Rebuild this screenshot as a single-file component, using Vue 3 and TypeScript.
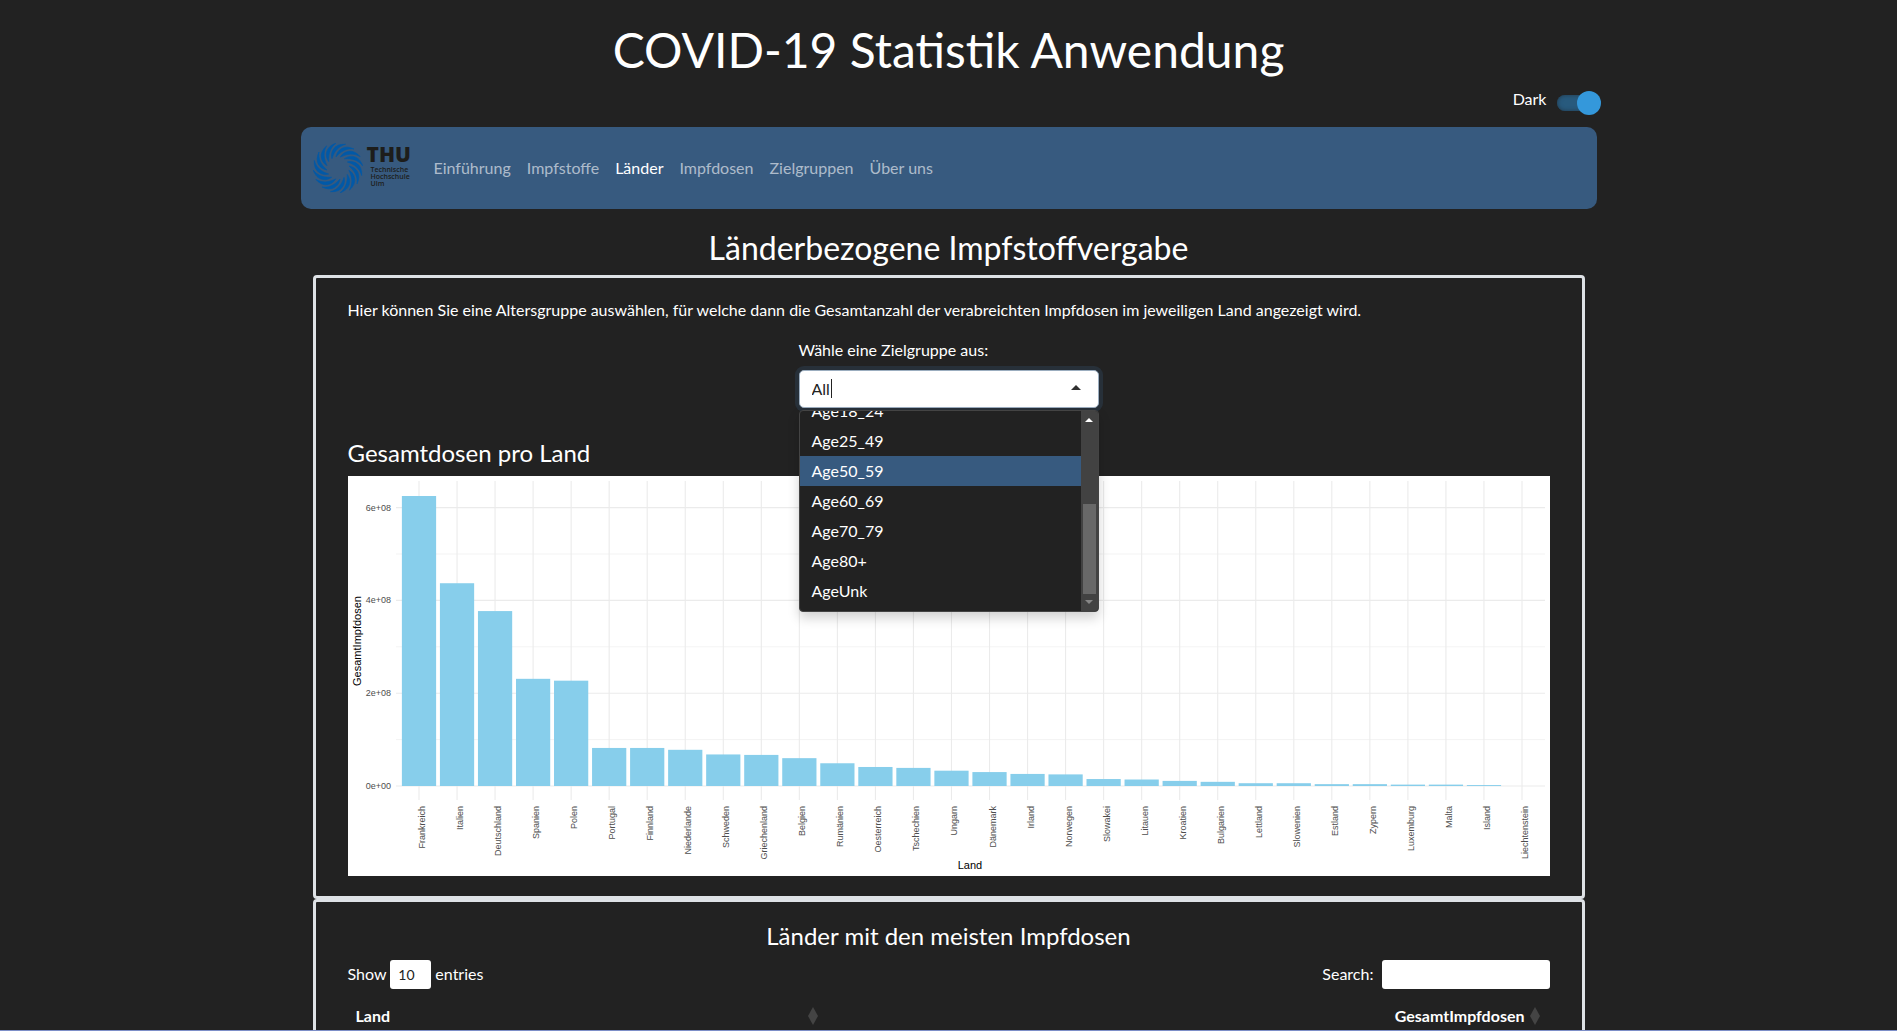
<script setup lang="ts">
import { ref } from 'vue'

interface Country {
  name: string
  doses: number
}

const navItems: string[] = ['Einführung', 'Impfstoffe', 'Länder', 'Impfdosen', 'Zielgruppen', 'Über uns']
const activeItem = ref('Länder')
const dark = ref(true)
const group = ref('All')
const highlighted = ref('Age50_59')
const search = ref('')
const groups: string[] = ['Age18_24', 'Age25_49', 'Age50_59', 'Age60_69', 'Age70_79', 'Age80+', 'AgeUnk']

// doses in millions
const countries: Country[] = [
  { name: 'Frankreich', doses: 625 },
  { name: 'Italien', doses: 437 },
  { name: 'Deutschland', doses: 377 },
  { name: 'Spanien', doses: 231 },
  { name: 'Polen', doses: 227 },
  { name: 'Portugal', doses: 82 },
  { name: 'Finnland', doses: 82 },
  { name: 'Niederlande', doses: 78 },
  { name: 'Schweden', doses: 68 },
  { name: 'Griechenland', doses: 67 },
  { name: 'Belgien', doses: 60 },
  { name: 'Rumänien', doses: 49 },
  { name: 'Oesterreich', doses: 41 },
  { name: 'Tschechien', doses: 39 },
  { name: 'Ungarn', doses: 33 },
  { name: 'Dänemark', doses: 30 },
  { name: 'Irland', doses: 26 },
  { name: 'Norwegen', doses: 25 },
  { name: 'Slowakei', doses: 15 },
  { name: 'Litauen', doses: 14 },
  { name: 'Kroatien', doses: 11 },
  { name: 'Bulgarien', doses: 9 },
  { name: 'Lettland', doses: 6 },
  { name: 'Slowenien', doses: 6 },
  { name: 'Estland', doses: 4 },
  { name: 'Zypern', doses: 4 },
  { name: 'Luxemburg', doses: 3 },
  { name: 'Malta', doses: 3 },
  { name: 'Island', doses: 2 },
  { name: 'Liechtenstein', doses: 0 },
]

const step = 1103 / 29
const barWidth = step * 0.9
const centerX = (i: number): number => 71 + i * step
const scaleY = (doses: number): number => 310 - doses * 0.464

const majorTicks = [
  { value: 0, label: '0e+00' },
  { value: 200, label: '2e+08' },
  { value: 400, label: '4e+08' },
  { value: 600, label: '6e+08' },
]
const minorTicks = [100, 300, 500]

// curved blades of the university emblem
const blades: number[] = Array.from({ length: 16 }, (_, i) => i * 22.5)
</script>

<template>
  <div class="page">
    <div class="container">
      <h1>COVID-19 Statistik Anwendung</h1>
      <div class="theme-row">
        <label for="theme">Dark</label>
        <input id="theme" v-model="dark" class="switch" type="checkbox" role="switch" />
      </div>

      <nav class="navbar">
        <a class="brand" href="#" aria-label="THU">
          <svg class="emblem" viewBox="-25 -25 50 50" aria-hidden="true">
            <path
              v-for="a in blades"
              :key="a"
              :transform="`rotate(${a})`"
              d="M-2 -11 C-1 -18 6 -24 16 -19 C9 -20 3 -17 -2 -11 Z"
              fill="#0059a8"
              stroke="#0059a8"
              stroke-width="0.6"
            />
          </svg>
          <span class="brand-text">
            <span class="brand-name">THU</span>
            <span class="brand-sub">
              <span>Technische</span>
              <span>Hochschule</span>
              <span>Ulm</span>
            </span>
          </span>
        </a>
        <ul class="nav-list">
          <li v-for="item in navItems" :key="item">
            <a href="#" :class="{ active: item === activeItem }" @click.prevent="activeItem = item">{{ item }}</a>
          </li>
        </ul>
      </nav>

      <main>
        <h2>Länderbezogene Impfstoffvergabe</h2>

        <section class="card">
          <p>
            Hier können Sie eine Altersgruppe auswählen, für welche dann die Gesamtanzahl der verabreichten Impfdosen
            im jeweiligen Land angezeigt wird.
          </p>
          <div class="picker">
            <label for="group">Wähle eine Zielgruppe aus:</label>
            <div class="combo">
              <input id="group" v-model="group" type="text" role="combobox" aria-expanded="true" aria-controls="groups" />
              <span class="caret" aria-hidden="true"></span>
              <span class="arrow" aria-hidden="true"></span>
              <div class="dropdown">
                <ul id="groups" class="options" role="listbox">
                  <li
                    v-for="g in groups"
                    :key="g"
                    role="option"
                    :class="{ highlighted: g === highlighted }"
                    @mouseenter="highlighted = g"
                    @click="group = g"
                  >
                    {{ g }}
                  </li>
                </ul>
                <div class="scrollbar" aria-hidden="true">
                  <span class="scroll-up"></span>
                  <span class="thumb"></span>
                  <span class="scroll-down"></span>
                </div>
              </div>
            </div>
          </div>

          <h4>Gesamtdosen pro Land</h4>
          <svg class="chart" viewBox="0 0 1202 400" role="img" aria-label="Gesamtdosen pro Land">
            <rect width="1202" height="400" fill="#fff" />
            <g stroke="#ebebeb">
              <line v-for="m in minorTicks" :key="m" x1="48" x2="1197" :y1="scaleY(m)" :y2="scaleY(m)" stroke-width="0.6" />
              <line v-for="t in majorTicks" :key="t.value" x1="48" x2="1197" :y1="scaleY(t.value)" :y2="scaleY(t.value)" stroke-width="1.1" />
              <line v-for="(c, i) in countries" :key="c.name" :x1="centerX(i)" :x2="centerX(i)" y1="5" y2="324" stroke-width="1.1" />
            </g>
            <rect
              v-for="(c, i) in countries"
              :key="c.name"
              :x="centerX(i) - barWidth / 2"
              :y="scaleY(c.doses)"
              :width="barWidth"
              :height="c.doses * 0.464"
              fill="#87ceeb"
            />
            <g class="tick">
              <text v-for="t in majorTicks" :key="t.value" x="43" :y="scaleY(t.value) + 3" text-anchor="end">{{ t.label }}</text>
              <text
                v-for="(c, i) in countries"
                :key="c.name"
                :transform="`translate(${centerX(i) + 6} 330) rotate(-90)`"
                text-anchor="end"
              >{{ c.name }}</text>
            </g>
            <g class="axis-title">
              <text x="622" y="393" text-anchor="middle">Land</text>
              <text transform="translate(13 165) rotate(-90)" text-anchor="middle">GesamtImpfdosen</text>
            </g>
          </svg>
        </section>

        <section class="card">
          <h4 class="centered">Länder mit den meisten Impfdosen</h4>
          <div class="controls">
            <label>Show
              <select class="length">
                <option>10</option>
                <option>25</option>
                <option>50</option>
                <option>100</option>
              </select>
              entries</label>
            <label class="search">Search: <input v-model="search" type="search" /></label>
          </div>
          <table>
            <thead>
              <tr>
                <th scope="col">
                  <span class="head">Land<svg viewBox="0 0 10 18" aria-hidden="true"><path d="M5 0 10 9 5 18 0 9Z" /></svg></span>
                </th>
                <th scope="col">
                  <span class="head end">GesamtImpfdosen<svg viewBox="0 0 10 18" aria-hidden="true"><path d="M5 0 10 9 5 18 0 9Z" /></svg></span>
                </th>
              </tr>
            </thead>
          </table>
        </section>
      </main>
    </div>
    <div class="edge"></div>
  </div>
</template>

<style>
html,
body {
  background: #222;
}
</style>

<style scoped>
* {
  box-sizing: border-box;
}
.page {
  height: 100vh;
  overflow: hidden;
  position: relative;
  background: #222;
  color: #fff;
  font: 16px/24px Lato, sans-serif;
}
.edge {
  position: absolute;
  inset: auto 0 0;
  height: 1px;
  background: #7d8fc8;
}
.container {
  max-width: 1320px;
  margin: 0 auto;
  padding: 0 12px;
}
h1,
h2,
h4,
p {
  margin: 0;
  font-weight: 400;
}
h1 {
  padding-top: 21px;
  font-size: 48px;
  line-height: 58px;
  text-align: center;
}
.theme-row {
  display: flex;
  justify-content: flex-end;
  gap: 10px;
  height: 48px;
  padding-top: 8px;
}
.switch {
  appearance: none;
  position: relative;
  width: 36px;
  height: 16px;
  margin: 8px 4px 0 0;
  border-radius: 8px;
  background: #285a7d;
  box-shadow: inset 0 0 4px #22384a;
}
.switch::after {
  content: '';
  position: absolute;
  top: -4px;
  right: -8px;
  width: 24px;
  height: 24px;
  border-radius: 50%;
  background: #3498db;
}
.navbar {
  display: flex;
  align-items: center;
  height: 82px;
  padding: 0 12px;
  border-radius: 10px;
  background: #375a7f;
}
.brand {
  display: flex;
  align-items: flex-start;
  gap: 4px;
  width: 97px;
  margin-right: 16px;
  color: #1d1d1b;
  text-decoration: none;
}
.emblem {
  flex: none;
  width: 50px;
  height: 50px;
}
.brand-text {
  display: flex;
  flex-direction: column;
  font-family: 'Open Sans', sans-serif;
}
.brand-name {
  font-size: 21px;
  line-height: 23px;
  font-weight: 800;
}
.brand-sub {
  display: flex;
  flex-direction: column;
  padding-left: 4px;
  font-size: 7px;
  line-height: 7px;
  font-weight: 600;
}
.nav-list {
  display: flex;
  margin: 0;
  padding: 0;
  list-style: none;
}
.nav-list a {
  padding: 8px;
  color: rgba(255, 255, 255, 0.6);
  text-decoration: none;
}
.nav-list a.active {
  color: #fff;
}
main {
  padding: 20px 12px 0;
}
h2 {
  margin-bottom: 8px;
  font-size: 32px;
  line-height: 38px;
  text-align: center;
}
.card {
  padding: 20px 32px;
  border: 3px solid #dee2e6;
  border-radius: 4px;
}
.picker {
  width: 300px;
  margin: 16px auto 31px;
}
.picker label {
  display: block;
  margin-bottom: 8px;
}
.combo {
  position: relative;
}
.combo input {
  display: block;
  width: 100%;
  height: 38px;
  padding: 0 12px 2px;
  border: 1px solid #9badbf;
  border-radius: 5px;
  outline: none;
  background: #fff;
  box-shadow: 0 0 0 4px rgba(55, 90, 127, 0.25);
  color: #222;
  font: inherit;
}
.caret {
  position: absolute;
  top: 9px;
  left: 32px;
  width: 1px;
  height: 19px;
  background: #222;
}
.arrow {
  position: absolute;
  top: 15px;
  right: 18px;
  border: solid transparent;
  border-width: 0 5px 5px;
  border-bottom-color: #303030;
}
.dropdown {
  position: absolute;
  z-index: 10;
  top: 40px;
  left: 0;
  display: flex;
  width: 100%;
  height: 202px;
  overflow: hidden;
  border: 1px solid #444;
  border-radius: 4px;
  background: #222;
  box-shadow: 0 6px 12px rgba(0, 0, 0, 0.18);
}
.options {
  display: flex;
  flex: 1;
  flex-direction: column;
  justify-content: flex-end;
  margin: 0;
  padding: 0 0 5px;
  list-style: none;
}
.options li {
  flex: none;
  height: 30px;
  padding: 3px 12px;
}
.options li.highlighted {
  background: #375a7f;
}
.scrollbar {
  display: flex;
  flex-direction: column;
  align-items: center;
  width: 17px;
  padding: 7px 0;
  background: #424242;
}
.scroll-up,
.scroll-down {
  border: solid transparent;
  border-width: 0 4px 4px;
  border-bottom-color: #fff;
}
.scroll-down {
  margin-top: 6px;
  border-width: 4px 4px 0;
  border-top-color: #868686;
}
.thumb {
  width: 13px;
  height: 90px;
  margin-top: auto;
  background: #686868;
}
h4 {
  margin-bottom: 9px;
  font-size: 24px;
  line-height: 28px;
}
.centered {
  margin-bottom: 10px;
  text-align: center;
}
.chart {
  display: block;
  width: 100%;
  font-family: 'Liberation Sans', Arial, sans-serif;
}
.tick {
  font-size: 9px;
  fill: #4d4d4d;
}
.axis-title {
  font-size: 11px;
  fill: #000;
}
.controls {
  display: flex;
  justify-content: space-between;
}
.length,
.search input {
  height: 29px;
  border: 0;
  border-radius: 3px;
  background: #fff;
  color: #222;
  font: 14px/21px Lato, sans-serif;
}
.length {
  appearance: none;
  width: 41px;
  padding: 4px 8px;
}
.search input {
  width: 168px;
  margin-left: 4px;
}
table {
  width: 100%;
  margin-top: 7px;
  border-collapse: collapse;
}
th {
  padding: 8px 10px 8px 8px;
}
th:first-child {
  width: 40%;
}
.head {
  display: flex;
  align-items: center;
  justify-content: space-between;
  gap: 5px;
}
.head.end {
  justify-content: flex-end;
}
.head svg {
  width: 10px;
  height: 18px;
  fill: #444;
}
</style>
